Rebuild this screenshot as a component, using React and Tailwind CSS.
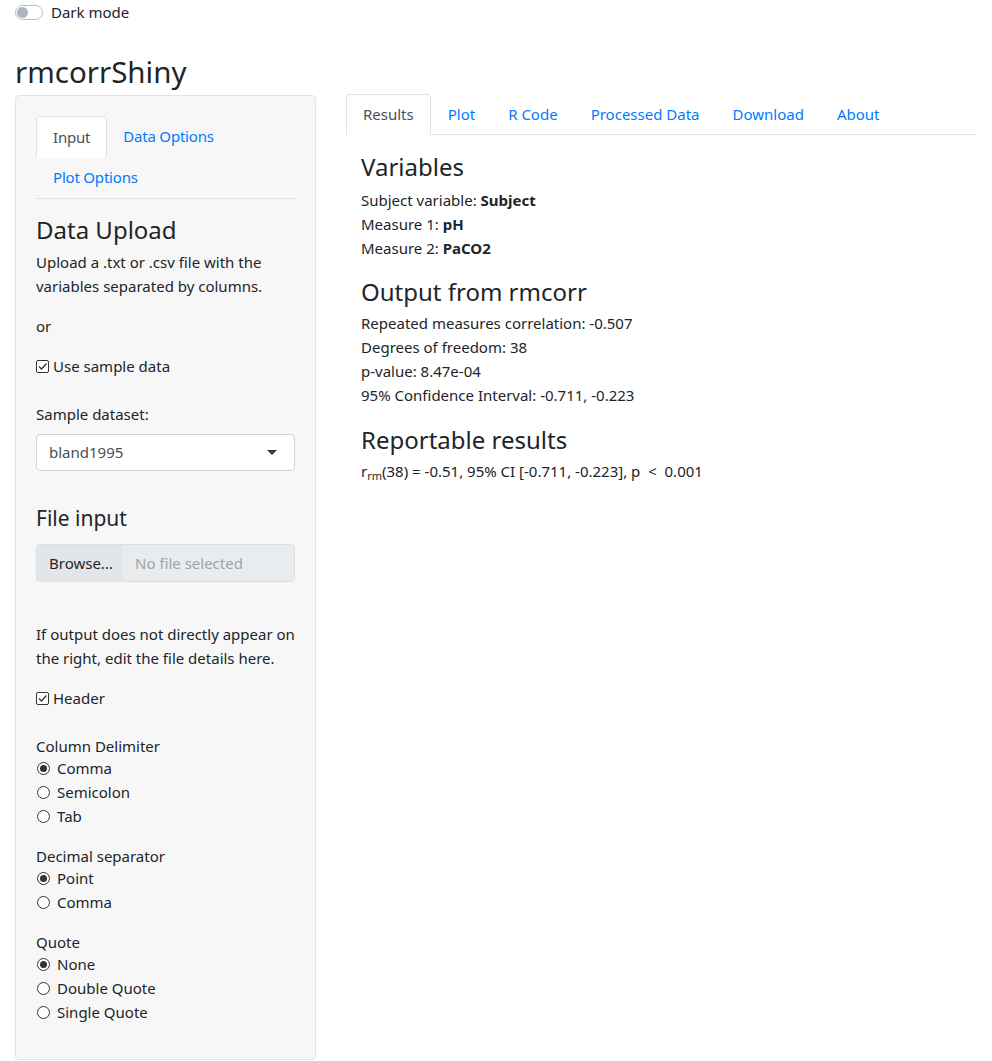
import React, { useState } from "react";

const FONT = { fontFamily: '"Noto Sans", "Open Sans", sans-serif' };

const Radio = ({ label, checked }) => (
  <label className="flex items-center h-6 leading-6">
    <span className="w-[13px] h-[13px] rounded-full border border-[#333] bg-white flex items-center justify-center mr-[7px] ml-px">
      {checked && <span className="w-[7px] h-[7px] rounded-full bg-[#333]" />}
    </span>
    {label}
  </label>
);

const Checkbox = ({ label }) => (
  <label className="flex items-center h-6 leading-6">
    <span className="w-[13px] h-[13px] border border-[#333] rounded-[2px] bg-white flex items-center justify-center mr-[4px]">
      <svg width="11" height="11" viewBox="0 0 11 11">
        <path d="M2 5.5 L4.5 8 L9.5 2.5" fill="none" stroke="#333" strokeWidth="1.3" />
      </svg>
    </span>
    {label}
  </label>
);

const SideTabs = () => (
  <div className="border-b border-[#dee2e6] text-[15px] tracking-[-0.2px]">
    <div className="flex h-[41px]">
      <div className="px-4 flex items-center bg-white border border-[#dee2e6] border-b-white rounded-t-[4px] -mb-px text-[#495057]">
        Input
      </div>
      <div className="px-4 flex items-center text-[#007bff]">Data Options</div>
    </div>
    <div className="flex h-[41px]">
      <div className="px-4 flex items-center text-[#007bff] ml-px">Plot Options</div>
    </div>
  </div>
);

const RadioGroup = ({ children }) => <div className="-mt-[2px]">{children}</div>;

const Sidebar = () => (
  <div className="w-[301px] shrink-0 bg-[#f7f7f7] border border-[#e3e3e3] rounded-[4px] px-5 pt-5 pb-[35px] text-[15px] text-[#212529]">
    <SideTabs />
    <h3 className="mt-4 text-[24px] leading-[29px]">Data Upload</h3>
    <p className="mt-[6px] leading-6">
      Upload a .txt or .csv file with the variables separated by columns.
    </p>
    <p className="mt-4 leading-6">or</p>
    <div className="mt-4">
      <Checkbox label="Use sample data" />
    </div>
    <div className="mt-6 leading-6">Sample dataset:</div>
    <div className="mt-2 h-[37px] bg-white border border-[#ced4da] rounded-[4px] flex items-center justify-between pl-3 pr-4 text-[#495057]">
      <span>bland1995</span>
      <svg width="12" height="7" viewBox="0 0 12 7">
        <path d="M1 1 L6 6 L11 1 Z" fill="#343a40" />
      </svg>
    </div>
    <h3 className="mt-[33px] text-[21px] leading-[29px]">File input</h3>
    <div className="mt-[11px] h-[38px] flex border border-[#dcdfe3] rounded-[4px] overflow-hidden">
      <div className="w-[86px] bg-[#e2e6ea] px-3 flex items-center text-[#212529]">
        Browse...
      </div>
      <div className="flex-1 bg-[#e9ecef] px-3 flex items-center text-[#a0a4a8]">
        No file selected
      </div>
    </div>
    <p className="mt-[40px] leading-6">
      If output does not directly appear on the right, edit the file details here.
    </p>
    <div className="mt-4">
      <Checkbox label="Header" />
    </div>
    <div className="mt-6 leading-6">Column Delimiter</div>
    <RadioGroup>
      <Radio label="Comma" checked />
      <Radio label="Semicolon" />
      <Radio label="Tab" />
    </RadioGroup>
    <div className="mt-4 leading-6">Decimal separator</div>
    <RadioGroup>
      <Radio label="Point" checked />
      <Radio label="Comma" />
    </RadioGroup>
    <div className="mt-4 leading-6">Quote</div>
    <RadioGroup>
      <Radio label="None" checked />
      <Radio label="Double Quote" />
      <Radio label="Single Quote" />
    </RadioGroup>
  </div>
);

const mainTabs = ["Results", "Plot", "R Code", "Processed Data", "Download", "About"];

const Main = () => (
  <div className="flex-1 ml-[30px] text-[15px] text-[#212529]">
    <div className="flex h-[41px] border-b border-[#dee2e6] mt-[-1px]">
      {mainTabs.map((t, i) =>
        i === 0 ? (
          <div
            key={t}
            className="px-4 flex items-center bg-white border border-[#dee2e6] border-b-white rounded-t-[4px] -mb-px text-[#495057]"
          >
            {t}
          </div>
        ) : (
          <div key={t} className="px-4 flex items-center text-[#007bff] ml-px">
            {t}
          </div>
        )
      )}
    </div>
    <div className="px-[15px]">
      <h3 className="mt-[17px] text-[24px] leading-[29px]">Variables</h3>
      <div className="mt-[7px] leading-6">
        Subject variable: <b>Subject</b>
      </div>
      <div className="leading-6">
        Measure 1: <b>pH</b>
      </div>
      <div className="leading-6">
        Measure 2: <b>PaCO2</b>
      </div>
      <h3 className="mt-[17px] text-[24px] leading-[29px]">Output from rmcorr</h3>
      <div className="mt-[5px] leading-6">Repeated measures correlation: -0.507</div>
      <div className="leading-6">Degrees of freedom: 38</div>
      <div className="leading-6">p-value: 8.47e-04</div>
      <div className="leading-6">95% Confidence Interval: -0.711, -0.223</div>
      <h3 className="mt-[18px] text-[24px] leading-[29px]">Reportable results</h3>
      <div className="mt-[5px] leading-6">
        r<sub className="text-[11px]">rm</sub>(38) = -0.51, 95% CI [-0.711, -0.223], p
        &nbsp;&lt;&nbsp; 0.001
      </div>
    </div>
  </div>
);

export default function App() {
  const [dark] = useState(false);
  return (
    <div style={FONT} className="bg-white min-h-screen px-[15px] text-[#212529]">
      <div className="h-[25px] flex items-center">
        <span
          className={
            "w-[28px] h-[15px] rounded-full border border-[#b8bec4] flex items-center px-px " +
            (dark ? "bg-[#007bff]" : "bg-white")
          }
        >
          <span className="w-[11px] h-[11px] rounded-full bg-[#adb5bd]" />
        </span>
        <span className="ml-2 text-[15px]">Dark mode</span>
      </div>
      <h1 className="mt-[29px] text-[29.5px] leading-[36px]">rmcorrShiny</h1>
      <div className="flex mt-[5px]">
        <Sidebar />
        <Main />
      </div>
    </div>
  );
}
